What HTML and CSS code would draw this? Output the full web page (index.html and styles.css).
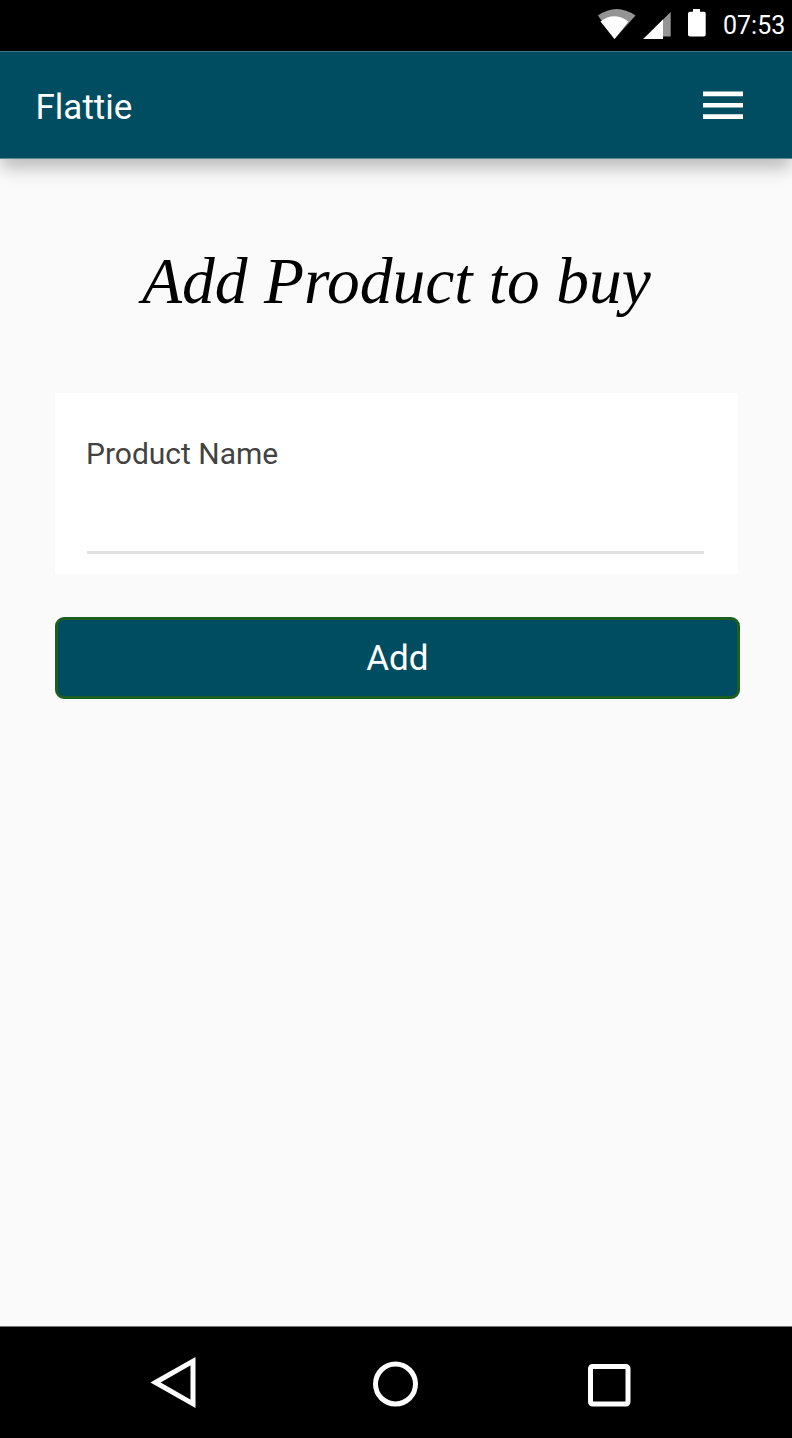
FILE: index.html
```html
<!DOCTYPE html>
<html lang="en">
<head>
<meta charset="utf-8">
<title>Flattie</title>
<link rel="stylesheet" href="styles.css">
</head>
<body>
<div class="screen">
  <div class="status-bar">
    <svg class="status-icons" width="112" height="34" viewBox="598 8 112 34">
      <path fill="#949494" d="M598 15.500Q616.500 2.500 635.500 15.500L614.500 39Z"/>
      <path fill="#fff" d="M600.500 21.500Q614 11 628.500 21.500L614.500 39Z"/>
      <path fill="#949494" d="M643 39L670.700 12V36.500H663V39Z"/>
      <path fill="#fff" d="M643.500 39L663 19.500V39Z"/>
      <path fill="#fff" d="M693 9h7v2.700h4a1.700 1.700 0 0 1 1.700 2v21a1.700 1.700 0 0 1-1.700 1.800h-14a2 2 0 0 1-2-1.800v-21a2 2 0 0 1 2-2h3z"/>
    </svg>
    <span class="clock">07:53</span>
  </div>
  <header class="app-bar">
    <span class="brand">Flattie</span>
    <svg class="menu" width="40" height="28" viewBox="0 0 40 28">
      <path fill="#fff" d="M0 .5h40v4.800H0zM0 12h40v4.500H0zM0 23.300h40V28H0z"/>
    </svg>
  </header>
  <main class="content">
    <h1 class="title">Add Product to buy</h1>
    <label class="field">
      <span class="field-label">Product Name</span>
      <input class="field-input" type="text">
    </label>
    <button class="add-button" type="button">Add</button>
  </main>
  <nav class="nav-bar">
    <svg width="792" height="112" viewBox="0 1326 792 112" fill="none" stroke="#fff" stroke-width="5">
      <path d="M155.500 1382.500L193 1361.200V1403.800Z"/>
      <circle cx="395.500" cy="1384" r="20"/>
      <rect x="590.500" y="1366.500" width="37.500" height="37.500" rx="2"/>
    </svg>
  </nav>
</div>
</body>
</html>
```
FILE: styles.css
```css
* { box-sizing: border-box; }
body {
  margin: 0;
  background: #fafafa;
  font-family: Roboto, "Liberation Sans", sans-serif;
}
.screen {
  display: flex;
  flex-direction: column;
  height: 1438px;
}
.status-bar {
  display: flex;
  justify-content: flex-end;
  height: 51px;
  padding: 8px 7px 0 0;
  background: #000;
  color: #fff;
}
.clock {
  width: 62px;
  margin-left: 13px;
  font-size: 25px;
  line-height: 36px;
  white-space: nowrap;
}
.app-bar {
  display: flex;
  justify-content: space-between;
  height: 108px;
  padding: 39px 49px 0 35.5px;
  border-top: 1px solid #3f7181;
  border-bottom: 1px solid #5a8794;
  background: #004d62;
  box-shadow: 0 10px 16px -1px rgba(0, 0, 0, 0.25);
  color: #fff;
}
.brand {
  margin-top: -3px;
  font-size: 35px;
  line-height: 40px;
}
.content {
  display: flex;
  flex: 1;
  flex-direction: column;
  padding: 78px 51px 0 55px;
}
.title {
  width: 510px;
  height: 100px;
  margin: 0 0 56px 87px;
  color: #000;
  font-family: Rochester, "Liberation Serif", cursive;
  font-size: 65.5px;
  font-style: italic;
  font-weight: 400;
  line-height: 88px;
  white-space: nowrap;
}
.field {
  display: flex;
  flex-direction: column;
  width: 683px;
  height: 181px;
  padding: 41px 34px 20px 31px;
  background: #fff;
}
.field-label {
  color: #424242;
  font-size: 30px;
  line-height: 40px;
}
.field-input {
  width: 617px;
  height: 80px;
  margin-left: 1px;
  padding: 30px 0 0;
  border: 0;
  border-bottom: 3px solid #e0e0e0;
  outline: 0;
  background: transparent;
  font: inherit;
  font-size: 30px;
}
.add-button {
  width: 685px;
  height: 82px;
  margin: 42.5px 0 0 .4px;
  padding: 2px 1px 0 0;
  border: 3px solid #1b5e20;
  border-radius: 9px;
  background: #004d62;
  color: #fff;
  font-family: inherit;
  font-size: 35px;
  line-height: 74px;
}
.nav-bar {
  height: 112px;
  border-top: 1px solid #777;
  background: #000;
}
.nav-bar svg {
  display: block;
  margin-top: -1px;
}
```
